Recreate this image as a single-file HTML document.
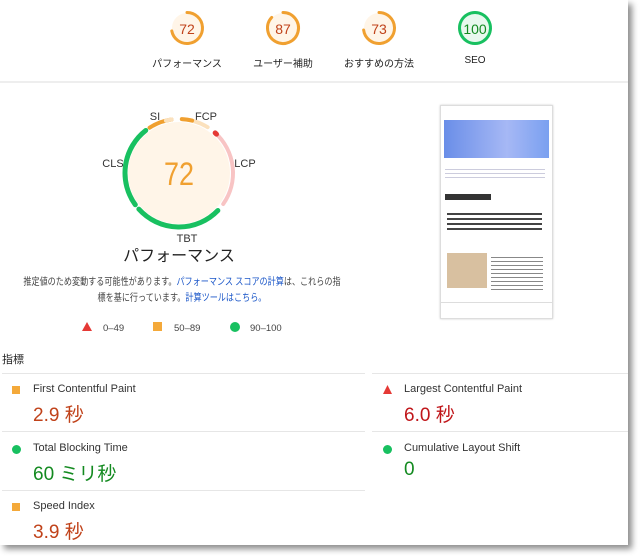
<!DOCTYPE html>
<html><head><meta charset="utf-8"><style>
body{margin:0;width:640px;height:556px;background:#fff;position:relative;overflow:hidden;font-family:"Liberation Sans","Noto Sans CJK JP",sans-serif;color:#333}
.card{position:absolute;left:0;top:0;width:628px;height:545px;background:#fff;box-shadow:4px 4px 6px rgba(0,0,0,.45)}
.abs{position:absolute}
.lbl{position:absolute;font-size:10px;color:#222;text-align:center;width:90px}
.mt{position:absolute;font-size:11px;color:#333}
.mv{position:absolute;font-size:19px}
.hr{position:absolute;height:1px;background:#e6e6e6}
</style></head><body>
<div class="card"></div>
<svg class="abs" style="left:0;top:0" width="640" height="556" id="s">
<line x1="0" y1="82" x2="628" y2="82" stroke="#ddd"/>
<circle cx="179" cy="173" r="51" fill="#fff5e8"/>
<text x="179" y="185" font-size="32" fill="#f0a030" text-anchor="middle" font-family="Liberation Sans Narrow, Liberation Sans, sans-serif" textLength="30" lengthAdjust="spacingAndGlyphs">72</text>
<g font-size="11" fill="#333" text-anchor="middle" font-family="Liberation Sans">
<text x="155" y="120">SI</text><text x="206" y="120">FCP</text><text x="245" y="167">LCP</text><text x="113" y="167">CLS</text><text x="187" y="242">TBT</text></g>
</svg>
<div class="lbl" style="left:142px;top:55px">パフォーマンス</div>
<div class="lbl" style="left:238px;top:55px">ユーザー補助</div>
<div class="lbl" style="left:334px;top:55px">おすすめの方法</div>
<div class="lbl" style="left:430px;top:55px">SEO</div>
<div class="abs" style="left:100px;top:242px;width:158px;text-align:center;font-size:16px;color:#222">パフォーマンス</div>
<div class="abs" style="left:-13px;top:275px;width:396px;text-align:center;font-size:10px;line-height:16px;color:#444;white-space:nowrap;transform:scaleX(0.81);transform-origin:182px 0">推定値のため変動する可能性があります。<span style="color:#1a56c8">パフォーマンス スコアの計算</span>は、これらの指<br>標を基に行っています。<span style="color:#1a56c8">計算ツールはこちら。</span></div>
<svg class="abs" style="left:80px;top:320px" width="220" height="14">
<polygon points="7,2 12,11 2,11" fill="#e53935"/><rect x="73" y="2" width="9" height="9" fill="#f4a93a"/><circle cx="155" cy="7" r="5" fill="#18c060"/>
<g font-size="9.5" fill="#444" font-family="Liberation Sans"><text x="23" y="11">0–49</text><text x="94" y="11">50–89</text><text x="170" y="11">90–100</text></g></svg>
<div class="abs" style="left:2px;top:351px;font-size:11px;color:#222">指標</div>
<div class="hr" style="left:2px;top:373px;width:363px"></div><div class="hr" style="left:372px;top:373px;width:256px"></div>
<div class="hr" style="left:2px;top:431px;width:363px"></div><div class="hr" style="left:372px;top:431px;width:256px"></div>
<div class="hr" style="left:2px;top:490px;width:363px"></div>
<div class="abs" style="left:12px;top:386px;width:8px;height:8px;background:#f4a93a"></div>
<div class="abs" style="left:12px;top:503px;width:8px;height:8px;background:#f4a93a"></div>
<div class="abs" style="left:12px;top:445px;width:9px;height:9px;border-radius:50%;background:#18c060"></div>
<div class="abs" style="left:383px;top:445px;width:9px;height:9px;border-radius:50%;background:#18c060"></div>
<svg class="abs" style="left:382px;top:384px" width="12" height="12"><polygon points="5.5,1 10,10 1,10" fill="#e53935"/></svg>
<div class="mt" style="left:33px;top:383px">First Contentful Paint</div>
<div class="mt" style="left:404px;top:383px">Largest Contentful Paint</div>
<div class="mt" style="left:33px;top:442px">Total Blocking Time</div>
<div class="mt" style="left:404px;top:442px">Cumulative Layout Shift</div>
<div class="mt" style="left:33px;top:500px">Speed Index</div>
<div class="mv" style="left:33px;top:400px;color:#c0421a">2.9 秒</div>
<div class="mv" style="left:404px;top:400px;color:#c0161a">6.0 秒</div>
<div class="mv" style="left:33px;top:459px;color:#138a20">60 ミリ秒</div>
<div class="mv" style="left:404px;top:459px;color:#138a20">0</div>
<div class="mv" style="left:33px;top:517px;color:#c0421a">3.9 秒</div>
<div class="abs" style="left:440px;top:105px;width:111px;height:212px;border:1px solid #ddd;background:#fff;box-shadow:0 0 2px #ccc">
 <div class="abs" style="left:3px;top:14px;width:105px;height:38px;background:linear-gradient(90deg,#6a8ee8,#a6b8f5 60%,#7aa0f0)"></div>
 <div class="abs" style="left:4px;top:60px;width:100px;height:12px;background:repeating-linear-gradient(#fff 0 3px,#ccd 3px 4px)"></div>
 <div class="abs" style="left:4px;top:88px;width:46px;height:6px;background:#333"></div>
 <div class="abs" style="left:6px;top:104px;width:95px;height:20px;background:repeating-linear-gradient(#fff 0 3px,#444 3px 5px)"></div>
 <div class="abs" style="left:6px;top:147px;width:40px;height:35px;background:#d8c0a0"></div>
 <div class="abs" style="left:50px;top:148px;width:52px;height:36px;background:repeating-linear-gradient(#fff 0 3px,#888 3px 4px)"></div>
 <div class="abs" style="left:0;top:196px;width:111px;height:1px;background:#ddd"></div>
</div>
<script>
var s=document.getElementById('s'),NS='http://www.w3.org/2000/svg';
function arc(cx,cy,r,a0,a1,col,w){var p=function(a){a=a*Math.PI/180;return [cx+r*Math.sin(a),cy-r*Math.cos(a)]};var A=p(a0),B=p(a1);var e=document.createElementNS(NS,'path');e.setAttribute('d','M'+A+' A'+r+' '+r+' 0 '+((a1-a0)>180?1:0)+' 1 '+B);e.setAttribute('fill','none');e.setAttribute('stroke',col);e.setAttribute('stroke-width',w);e.setAttribute('stroke-linecap','round');s.appendChild(e)}
function circ(cx,cy,r,f){var e=document.createElementNS(NS,'circle');e.setAttribute('cx',cx);e.setAttribute('cy',cy);e.setAttribute('r',r);e.setAttribute('fill',f);s.insertBefore(e,s.firstChild.nextSibling)}
var g=[[187,72,'#f0a030','#fff5e8'],[283,87,'#f0a030','#fff5e8'],[379,73,'#f0a030','#fff5e8'],[475,100,'#18c060','#e8f8ee']];
g.forEach(function(q){circ(q[0],28,15,q[3]);arc(q[0],28,15.5,0,q[1]*3.599,q[2],3);var t=document.createElementNS(NS,'text');t.setAttribute('x',q[0]);t.setAttribute('y',34);t.setAttribute('text-anchor','middle');t.setAttribute('font-size',14);t.setAttribute('font-family','Liberation Sans Narrow, Liberation Sans');t.setAttribute('fill',q[1]==100?'#138a20':'#c0421a');t.textContent=q[1];s.appendChild(t)});
var C=[179,173,54];
arc(C[0],C[1],C[2],3,32,'#fbe1bd',4);arc(C[0],C[1],C[2],3,14,'#f0a030',4);
arc(C[0],C[1],C[2],327,352,'#f0a030',4);arc(C[0],C[1],C[2],346,352,'#fbe1bd',4);
arc(C[0],C[1],C[2],42,125,'#f8c4c4',4);arc(C[0],C[1],C[2],42,44,'#e53935',5);
arc(C[0],C[1],C[2],134,228,'#18c060',5);arc(C[0],C[1],C[2],234,322,'#18c060',5);
</script>
</body></html>
